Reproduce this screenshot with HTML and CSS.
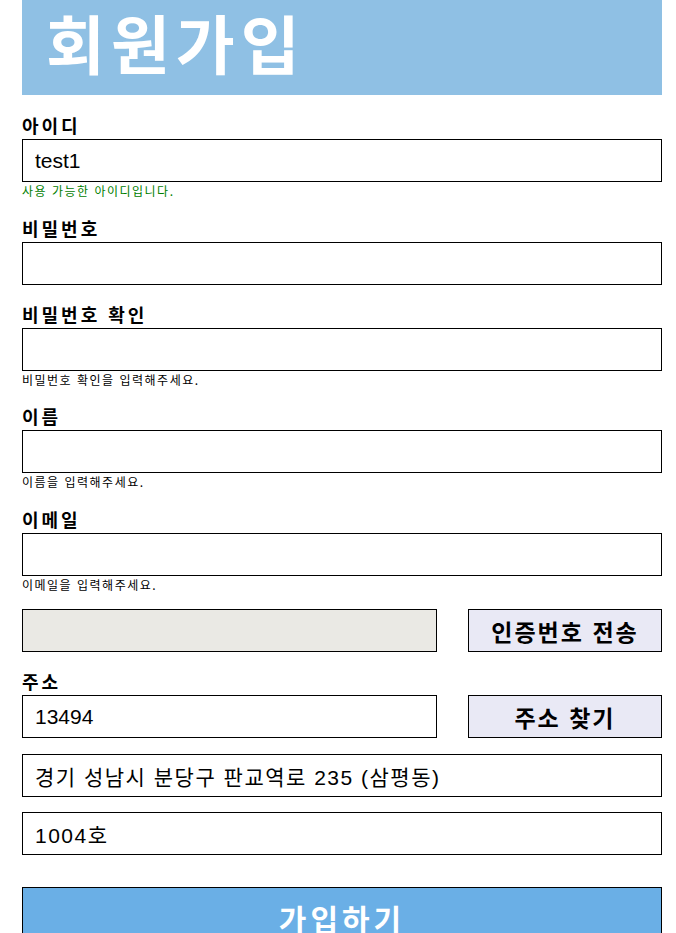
FILE: index.html
```html
<!DOCTYPE html>
<html lang="ko">
<head>
<meta charset="UTF-8" />
<meta name="viewport" content="width=device-width, initial-scale=1" />
<title>회원가입</title>
<link rel="stylesheet" href="styles.css">
</head>
<body>

<div class="wrap">
  <header>
    <h1>회원가입</h1>
  </header>

  <form class="join-form">
    <div class="field">
      <label for="user-id">아이디</label>
      <input type="text" id="user-id" value="test1" />
      <p class="msg ok">사용 가능한 아이디입니다.</p>
    </div>

    <div class="field">
      <label for="user-pw">비밀번호</label>
      <input type="password" id="user-pw" />
    </div>

    <div class="field">
      <label for="user-pw2">비밀번호 확인</label>
      <input type="password" id="user-pw2" />
      <p class="msg">비밀번호 확인을 입력해주세요.</p>
    </div>

    <div class="field">
      <label for="user-name">이름</label>
      <input type="text" id="user-name" />
      <p class="msg">이름을 입력해주세요.</p>
    </div>

    <div class="field">
      <label for="user-email">이메일</label>
      <input type="text" id="user-email" />
      <p class="msg">이메일을 입력해주세요.</p>
    </div>

    <div class="field">
      <div class="row">
        <input type="text" id="auth-code" disabled />
        <button type="button" class="side-btn">인증번호 전송</button>
      </div>
    </div>

    <div class="field">
      <label for="zip">주소</label>
      <div class="row">
        <input type="text" id="zip" value="13494" />
        <button type="button" class="side-btn">주소 찾기</button>
      </div>
      <input type="text" class="addr" value="경기 성남시 분당구 판교역로 235 (삼평동)" />
      <input type="text" class="addr detail" value="1004호" />
    </div>

    <button type="submit" class="submit">가입하기</button>
  </form>
</div>

</body>
</html>
```

FILE: styles.css
```css
body {
  margin: 0;
  font-family: "Liberation Sans", "Noto Sans CJK KR", sans-serif;
  color: #000;
  background: #fff;
}
.wrap {
  width: 640px;
  margin-left: 22px;
}
header {
  background: #8fc0e4;
  height: 95px;
  box-sizing: border-box;
  display: flex;
  align-items: center;
  padding: 0 0 12px 24px;
}
header h1 {
  margin: 0;
  color: white;
  font-family: "Noto Sans CJK KR", sans-serif;
  font-size: 64px;
  font-weight: bold;
  letter-spacing: 6px;
  line-height: 1.2;
}
.join-form {
  padding-top: 18px;
}
.field {
  margin-bottom: 17px;
}
.field label {
  display: block;
  font-family: "Noto Sans CJK KR", sans-serif;
  font-size: 18px;
  font-weight: bold;
  letter-spacing: 3px;
  line-height: 24px;
  margin-bottom: 2px;
}
.field input {
  display: block;
  width: 100%;
  height: 43px;
  box-sizing: border-box;
  border: 1px solid #000;
  padding: 0 12px;
  font-family: "Liberation Sans", "Noto Sans CJK KR", sans-serif;
  font-size: 21px;
  color: #000;
  background: white;
  outline: none;
}
.field input:disabled {
  background: #eae9e4;
}
.msg {
  margin: 0 0 -0.5px;
  font-family: "Noto Sans CJK KR", sans-serif;
  font-size: 12px;
  letter-spacing: 1.5px;
  line-height: 17px;
  color: #000;
}
.msg.ok {
  color: #008000;
}
/* 버튼 있는 줄 */
.row {
  display: flex;
  gap: 31px;
}
.row input {
  width: 415px;
  flex: none;
}
.side-btn {
  flex: 1;
  height: 43px;
  border: 1px solid #000;
  background: #e9e9f5;
  font-family: "Noto Sans CJK KR", sans-serif;
  font-size: 23px;
  font-weight: bold;
  letter-spacing: 2px;
  cursor: pointer;
}
.field input.addr {
  margin-top: 16px;
  letter-spacing: 1.5px;
}
.field input.addr.detail {
  margin-top: 15px;
}
.submit {
  display: block;
  width: 100%;
  height: 62px;
  margin-top: 32px;
  border: 1px solid #000;
  background: #6aafe6;
  color: white;
  font-family: "Noto Sans CJK KR", sans-serif;
  font-size: 30px;
  font-weight: bold;
  letter-spacing: 4px;
  cursor: pointer;
}
```
